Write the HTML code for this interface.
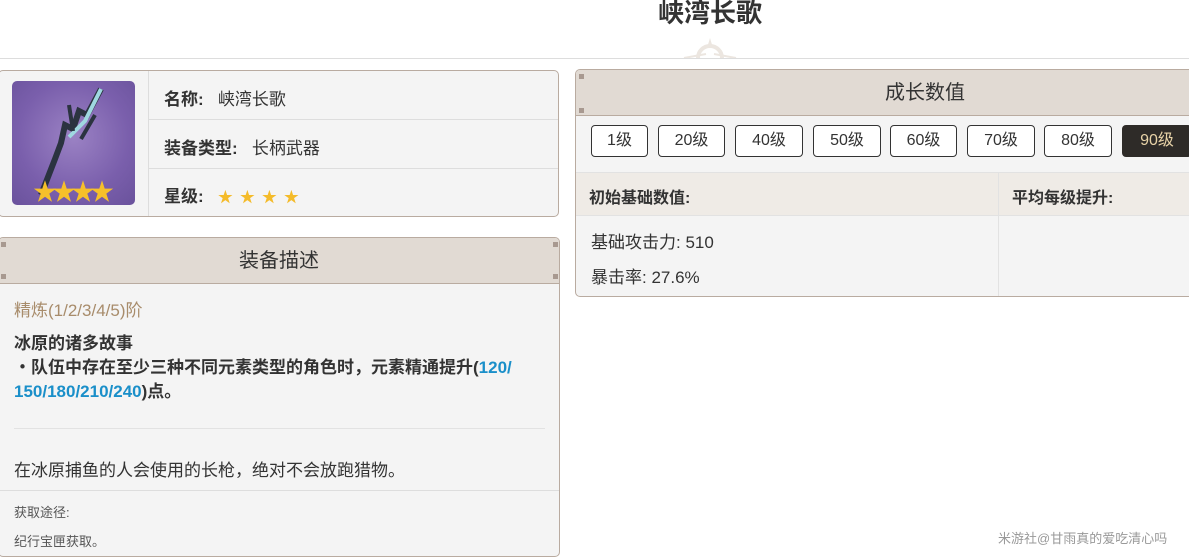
<!DOCTYPE html>
<html><head><meta charset="utf-8"><style>
*{box-sizing:border-box;margin:0;padding:0}
body{width:1189px;height:558px;overflow:hidden;background:#fff;font-family:"Liberation Sans","Noto Sans CJK SC",sans-serif;color:#333;position:relative}
.abs{position:absolute}
.card{position:absolute;background:#f4f4f4;border:1px solid #b9aba0;border-radius:5px;overflow:hidden}
.hdr{background:#e1dad3;border-bottom:1px solid #b9aba0;text-align:center;color:#333;font-size:20px}
.btn{position:absolute;top:125px;height:32px;border:1px solid #333;border-radius:4px;background:#fff;font-size:16px;line-height:30px;text-align:center;color:#333}
.dot{position:absolute;width:5px;height:5px;background:#a89990}
</style></head><body>
<div class="abs" style="left:600px;top:-7px;width:220px;text-align:center;font-size:26px;font-weight:bold;color:#333">峡湾长歌</div>
<div class="abs" style="left:0;top:58px;width:1189px;height:1px;background:#ddd"></div>
<svg class="abs" style="left:678px;top:36px" width="64" height="22" viewBox="0 0 64 22"><path d="M6 22 L28 18 M58 22 L36 18" stroke="#ece6e0" stroke-width="2" fill="none"/><circle cx="32" cy="22" r="12" fill="none" stroke="#ece6e0" stroke-width="4"/><path d="M32 2 L35 12 L29 12Z" fill="#ece6e0"/></svg>

<div class="card" style="left:-2px;top:70px;width:561px;height:147px">
  <div class="abs" style="left:13px;top:10px;width:123px;height:124px;border-radius:5px;background:radial-gradient(circle at 50% 45%,#9b82c4,#7a5fac 60%,#6a529c)"></div>
  <svg class="abs" style="left:30px;top:14px" width="80" height="120" viewBox="0 0 80 120"><path d="M72 4 L58 30 L50 26 L44 44 L36 40 L32 58 L26 74 L12 110" stroke="#2b3340" stroke-width="6" fill="none"/><path d="M72 4 L56 36 L40 52" stroke="#9fd8e0" stroke-width="4" fill="none"/><path d="M40 20 L44 46 M66 30 L52 54" stroke="#2b3340" stroke-width="4" fill="none"/></svg>
  <div class="abs" style="left:34px;top:110px;font-size:24px;color:#f6c02a;letter-spacing:-5px;line-height:24px">★★★★</div>
  <div class="abs" style="left:149px;top:0;width:1px;height:147px;background:#ddd"></div>
  <div class="abs" style="left:150px;top:48px;width:411px;height:1px;background:#ddd"></div>
  <div class="abs" style="left:150px;top:97px;width:411px;height:1px;background:#ddd"></div>
  <div class="abs" style="left:165px;top:14px;font-size:17px"><b>名称:</b>&nbsp;&nbsp;&nbsp;峡湾长歌</div>
  <div class="abs" style="left:165px;top:63px;font-size:17px"><b>装备类型:</b>&nbsp;&nbsp;&nbsp;长柄武器</div>
  <div class="abs" style="left:165px;top:111px;font-size:17px"><b>星级:</b>&nbsp;&nbsp;&nbsp;<span style="color:#f4bb2a;font-size:15px;letter-spacing:7px">★★★★</span></div>
</div>

<div class="card" style="left:-2px;top:237px;width:562px;height:320px">
  <div class="hdr" style="height:46px;line-height:46px">装备描述</div>
  <div class="dot" style="left:554px;top:4px"></div><div class="dot" style="left:554px;top:36px"></div>
  <div class="dot" style="left:2px;top:4px"></div><div class="dot" style="left:2px;top:36px"></div>
  <div class="abs" style="left:15px;top:58px;font-size:17px;color:#a88c6b">精炼(1/2/3/4/5)阶</div>
  <div class="abs" style="left:15px;top:94px;width:535px;font-size:17px;font-weight:bold;line-height:24px">冰原的诸多故事<br>・队伍中存在至少三种不同元素类型的角色时，元素精通提升(<span style="color:#1a8fc9">120/<br>150/180/210/240</span>)点。</div>
  <div class="abs" style="left:15px;top:190px;width:531px;height:1px;background:#e2e2e2"></div>
  <div class="abs" style="left:15px;top:218px;font-size:17px">在冰原捕鱼的人会使用的长枪，绝对不会放跑猎物。</div>
  <div class="abs" style="left:0;top:252px;width:562px;height:1px;background:#ddd"></div>
  <div class="abs" style="left:15px;top:264px;font-size:13px;color:#555">获取途径:</div>
  <div class="abs" style="left:15px;top:293px;font-size:13px;color:#555">纪行宝匣获取。</div>
</div>

<div class="card" style="left:575px;top:69px;width:630px;height:228px">
  <div class="hdr" style="height:46px;line-height:46px;padding-left:70px">成长数值</div>
  <div class="dot" style="left:3px;top:4px"></div><div class="dot" style="left:3px;top:38px"></div>
  <div class="abs" style="left:0;top:102px;width:630px;height:44px;background:#efebe6;border-top:1px solid #e2e2e2;border-bottom:1px solid #e2e2e2"></div>
  <div class="abs" style="left:422px;top:102px;width:1px;height:126px;background:#e2e2e2"></div>
  <div class="abs" style="left:13px;top:114px;font-size:16px;font-weight:bold">初始基础数值:</div>
  <div class="abs" style="left:436px;top:114px;font-size:16px;font-weight:bold">平均每级提升:</div>
  <div class="abs" style="left:15px;top:158px;font-size:17px">基础攻击力: 510</div>
  <div class="abs" style="left:15px;top:193px;font-size:17px">暴击率: 27.6%</div>
</div>
<div class="btn" style="left:591px;width:57px">1级</div>
<div class="btn" style="left:658px;width:67px">20级</div>
<div class="btn" style="left:735px;width:68px">40级</div>
<div class="btn" style="left:813px;width:68px">50级</div>
<div class="btn" style="left:890px;width:67px">60级</div>
<div class="btn" style="left:967px;width:68px">70级</div>
<div class="btn" style="left:1044px;width:68px">80级</div>
<div class="btn" style="left:1122px;width:70px;background:#2e2b28;border-color:#2e2b28;color:#e8d3a8">90级</div>
<div class="abs" style="left:998px;top:528px;font-size:13px;color:#999">米游社@甘雨真的爱吃清心吗</div>
</body></html>
